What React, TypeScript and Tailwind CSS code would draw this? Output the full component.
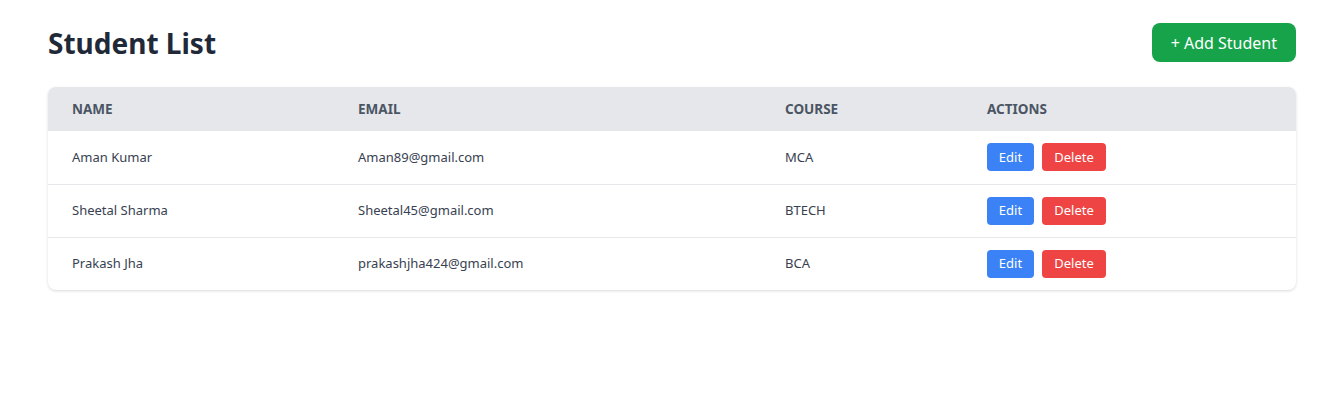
const students = [
  { name: 'Aman Kumar', email: 'Aman89@gmail.com', course: 'MCA' },
  { name: 'Sheetal Sharma', email: 'Sheetal45@gmail.com', course: 'BTECH' },
  { name: 'Prakash Jha', email: 'prakashjha424@gmail.com', course: 'BCA' },
];

export default function App() {
  return (
    <div className="min-h-[413px] bg-white font-['Noto_Sans','Open_Sans',sans-serif]">
      <div className="ml-[48px] w-[1248px] pt-[23px]">
        <div className="flex items-center justify-between">
          <h1 className="text-[28px] font-bold text-[#1f2937] leading-none">Student List</h1>
          <button className="h-[39px] px-[19px] rounded-lg bg-[#16a34a] text-white text-[16px]">
            + Add Student
          </button>
        </div>

        <div className="mt-[25px] rounded-lg bg-white shadow-[0_1px_3px_rgba(0,0,0,0.15)] overflow-hidden">
          <table className="w-full text-left border-collapse">
            <thead>
              <tr className="bg-[#e5e7eb] h-[44px]">
                <th className="w-[286px] px-6 text-[13.5px] font-bold text-[#4b5563] uppercase">Name</th>
                <th className="w-[427px] px-6 text-[13.5px] font-bold text-[#4b5563] uppercase">Email</th>
                <th className="w-[202px] px-6 text-[13.5px] font-bold text-[#4b5563] uppercase">Course</th>
                <th className="px-6 text-[13.5px] font-bold text-[#4b5563] uppercase">Actions</th>
              </tr>
            </thead>
            <tbody>
              {students.map((s, i) => (
                <tr key={s.email} className={i > 0 ? 'h-[53px] border-t border-[#e5e7eb]' : 'h-[53px]'}>
                  <td className="px-6 text-[13px] text-[#374151]">{s.name}</td>
                  <td className="px-6 text-[13px] text-[#374151]">{s.email}</td>
                  <td className="px-6 text-[13px] text-[#374151]">{s.course}</td>
                  <td className="px-6">
                    <div className="flex gap-2">
                      <button className="h-[28px] w-[47px] rounded bg-[#3b82f6] text-white text-[13px]">Edit</button>
                      <button className="h-[28px] w-[64px] rounded bg-[#ef4444] text-white text-[13px]">Delete</button>
                    </div>
                  </td>
                </tr>
              ))}
            </tbody>
          </table>
        </div>
      </div>
    </div>
  );
}
